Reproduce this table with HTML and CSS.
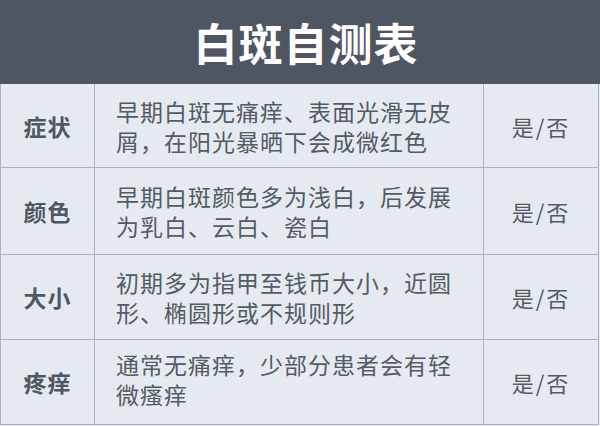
FILE: index.html
```html
<!DOCTYPE html>
<html lang="zh-CN">
<head>
<meta charset="utf-8">
<title>白斑自测表</title>
<link rel="stylesheet" href="styles.css">
</head>
<body>
<div class="sheet">
  <header class="title-bar"><h1 class="title">白斑自测表</h1></header>
  <div class="test-table">
    <div class="row row-1">
      <div class="cell label">症状</div>
      <div class="cell desc">早期白斑无痛痒、表面光滑无皮屑，在阳光暴晒下会成微红色</div>
      <div class="cell answer">是/否</div>
    </div>
    <div class="row row-2">
      <div class="cell label">颜色</div>
      <div class="cell desc">早期白斑颜色多为浅白，后发展为乳白、云白、瓷白</div>
      <div class="cell answer">是/否</div>
    </div>
    <div class="row row-3">
      <div class="cell label">大小</div>
      <div class="cell desc">初期多为指甲至钱币大小，近圆形、椭圆形或不规则形</div>
      <div class="cell answer">是/否</div>
    </div>
    <div class="row row-4">
      <div class="cell label">疼痒</div>
      <div class="cell desc">通常无痛痒，少部分患者会有轻微瘙痒</div>
      <div class="cell answer">是/否</div>
    </div>
  </div>
</div>
</body>
</html>
```
FILE: styles.css
```css
html, body {
  margin: 0;
  padding: 0;
  background: #e5eaf0;
}
* { box-sizing: border-box; }
body {
  width: 600px;
  height: 426px;
  overflow: hidden;
  font-family: "Noto Sans CJK SC", "Noto Sans", sans-serif;
  color: #535b64;
}
.sheet {
  width: 600px;
}
.title-bar {
  height: 84px;
  padding-left: 12px;
  background: #4e5761;
  display: flex;
  align-items: center;
  justify-content: center;
}
.title {
  margin: 0;
  color: #ffffff;
  font-size: 44px;
  font-weight: 700;
  letter-spacing: 1px;
  line-height: 1;
}
.test-table {
  width: 599px;
  display: flex;
  flex-direction: column;
}
.row {
  display: grid;
  grid-template-columns: 94px 389px 1fr;
  border-left: 1px solid #aab2bc;
  border-bottom: 1px solid #aab2bc;
}
.row-1 { height: 84px; }
.row-2 { height: 87px; }
.row-3 { height: 85px; }
.row-4 { height: 85px; }
.cell {
  border-right: 1px solid #aab2bc;
  display: flex;
  align-items: center;
}
.label {
  justify-content: center;
  font-size: 23px;
  font-weight: 700;
  letter-spacing: 1px;
  color: #4f5761;
}
.desc {
  padding: 0 22px 0 21px;
  font-size: 23px;
  letter-spacing: 1px;
  line-height: 30px;
}
.answer {
  justify-content: center;
  font-size: 22px;
  letter-spacing: 2px;
}
.row-4 .desc {
  padding-bottom: 6px;
}
```
